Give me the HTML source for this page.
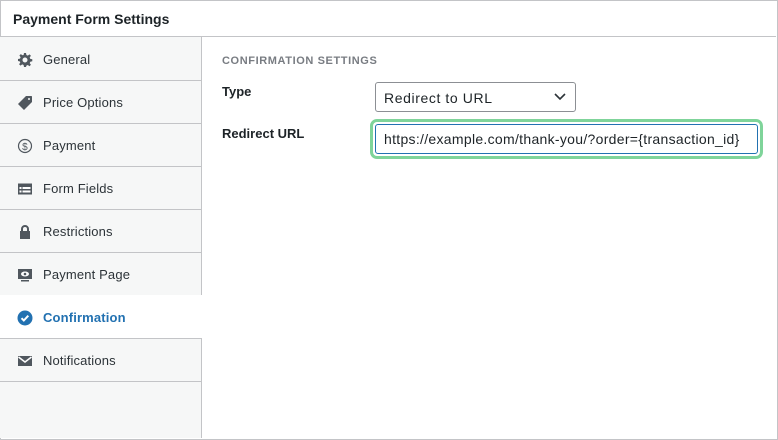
<!DOCTYPE html>
<html><head><style>
*{box-sizing:border-box;margin:0;padding:0}
body{width:778px;height:440px;background:#fff;font-family:"Liberation Sans","DejaVu Sans",sans-serif;color:#1d2327;font-size:13px;position:relative;overflow:hidden}
.box{position:absolute;left:0;top:0;width:778px;height:440px;border:1px solid #c3c4c7}
.hdr{position:absolute;left:0;top:0;width:776px;height:37px;border-bottom:1px solid #c3c4c7;font-weight:bold;font-size:14px;padding:11px 0 0 13px}
.side{position:absolute;left:0;top:37px;width:202px;height:401px;background:#f6f7f7;border-right:1px solid #c3c4c7}
.it{position:absolute;left:0;width:201px;height:44px;border-bottom:1px solid #c3c4c7;padding:15px 0 0 43px;font-size:13px;color:#2c3338;letter-spacing:.15px}
.it svg{position:absolute;left:17px;top:15px}
.act{background:#fff;width:202px;color:#2271b1;font-weight:bold}
.h{position:absolute;left:222px;top:55px;font-size:11px;font-weight:bold;color:#787c82;letter-spacing:.6px}
.l{position:absolute;left:222px;font-weight:bold;font-size:13px}
.sel{position:absolute;left:375px;top:82px;width:201px;height:30px;border:1px solid #8c8f94;border-radius:3px;padding:7px 0 0 8px;font-size:14px;letter-spacing:.6px}
.ring{position:absolute;left:370px;top:119px;width:393px;height:40px;border:3px solid #7fd49a;border-radius:7px}
.inp{position:absolute;left:375px;top:124px;width:383px;height:30px;border:1px solid #2271b1;border-radius:3px;padding:6px 0 0 8px;font-size:14px;white-space:nowrap;letter-spacing:.3px}
</style></head><body>
<div class="box"></div>
<div class="hdr">Payment Form Settings</div>
<div class="side">
<div class="it" style="top:0"><svg width="16" height="16" viewBox="0 0 16 16"><path fill="#50575e" d="M7 1h2l.4 2 1.4.6 1.7-1.2 1.4 1.4-1.2 1.7.6 1.4 2 .4v2l-2 .4-.6 1.4 1.2 1.7-1.4 1.4-1.7-1.2-1.4.6L9 15H7l-.4-2-1.4-.6-1.7 1.2-1.4-1.4 1.2-1.7L2.7 9.4 1 9V7l2-.4.6-1.4-1.2-1.7 1.4-1.4 1.7 1.2L6.6 3zM8 5.5a2.5 2.5 0 100 5 2.5 2.5 0 000-5z"/></svg>General</div>
<div class="it" style="top:43px"><svg width="16" height="16" viewBox="0 0 16 16"><path fill="#50575e" d="M9 1h5.5l.5.5V7l-8 8-6-6zM12 3a1 1 0 100 2 1 1 0 000-2z"/></svg>Price Options</div>
<div class="it" style="top:86px"><svg width="16" height="16" viewBox="0 0 16 16"><circle cx="8" cy="8" r="6.5" fill="none" stroke="#50575e" stroke-width="1.2"/><text x="8" y="12" font-size="10" text-anchor="middle" fill="#50575e" font-family="Liberation Sans">$</text></svg>Payment</div>
<div class="it" style="top:129px"><svg width="16" height="16" viewBox="0 0 16 16"><rect x="1" y="2.5" width="14" height="11" fill="#50575e"/><rect x="2.5" y="6" width="2" height="2" fill="#fff"/><rect x="2.5" y="9.5" width="2" height="2" fill="#fff"/><rect x="5.5" y="6" width="8" height="2" fill="#fff"/><rect x="5.5" y="9.5" width="8" height="2" fill="#fff"/></svg>Form Fields</div>
<div class="it" style="top:172px"><svg width="16" height="16" viewBox="0 0 16 16"><path fill="none" stroke="#50575e" stroke-width="2" d="M5 7V5a3 3 0 016 0v2"/><rect x="3" y="7" width="10" height="8" fill="#50575e"/></svg>Restrictions</div>
<div class="it" style="top:215px"><svg width="16" height="16" viewBox="0 0 16 16"><rect x="1" y="2" width="14" height="10" fill="#50575e"/><ellipse cx="8" cy="7" rx="4" ry="2.5" fill="#fff"/><circle cx="8" cy="7" r="1.3" fill="#50575e"/><rect x="4" y="13" width="8" height="1.5" fill="#50575e"/></svg>Payment Page</div>
<div class="it act" style="top:258px"><svg width="16" height="16" viewBox="0 0 16 16"><circle cx="8" cy="8" r="7.5" fill="#2271b1"/><path d="M4.5 8.2l2.3 2.3 4.5-4.8" fill="none" stroke="#fff" stroke-width="2"/></svg>Confirmation</div>
<div class="it" style="top:301px"><svg width="16" height="16" viewBox="0 0 16 16"><rect x="1" y="3" width="14" height="10" fill="#50575e"/><path d="M1.5 4L8 9l6.5-5" fill="none" stroke="#fff" stroke-width="1.5"/></svg>Notifications</div>
</div>
<div class="h">CONFIRMATION SETTINGS</div>
<div class="l" style="top:84px">Type</div>
<div class="sel">Redirect to URL<svg style="position:absolute;right:9px;top:10px" width="12" height="8" viewBox="0 0 12 8"><path d="M1 1l5 5 5-5" fill="none" stroke="#2c3338" stroke-width="1.6"/></svg></div>
<div class="l" style="top:126px">Redirect URL</div>
<div class="ring"></div>
<div class="inp">https://example.com/thank-you/?order={transaction_id}</div>
</body></html>
